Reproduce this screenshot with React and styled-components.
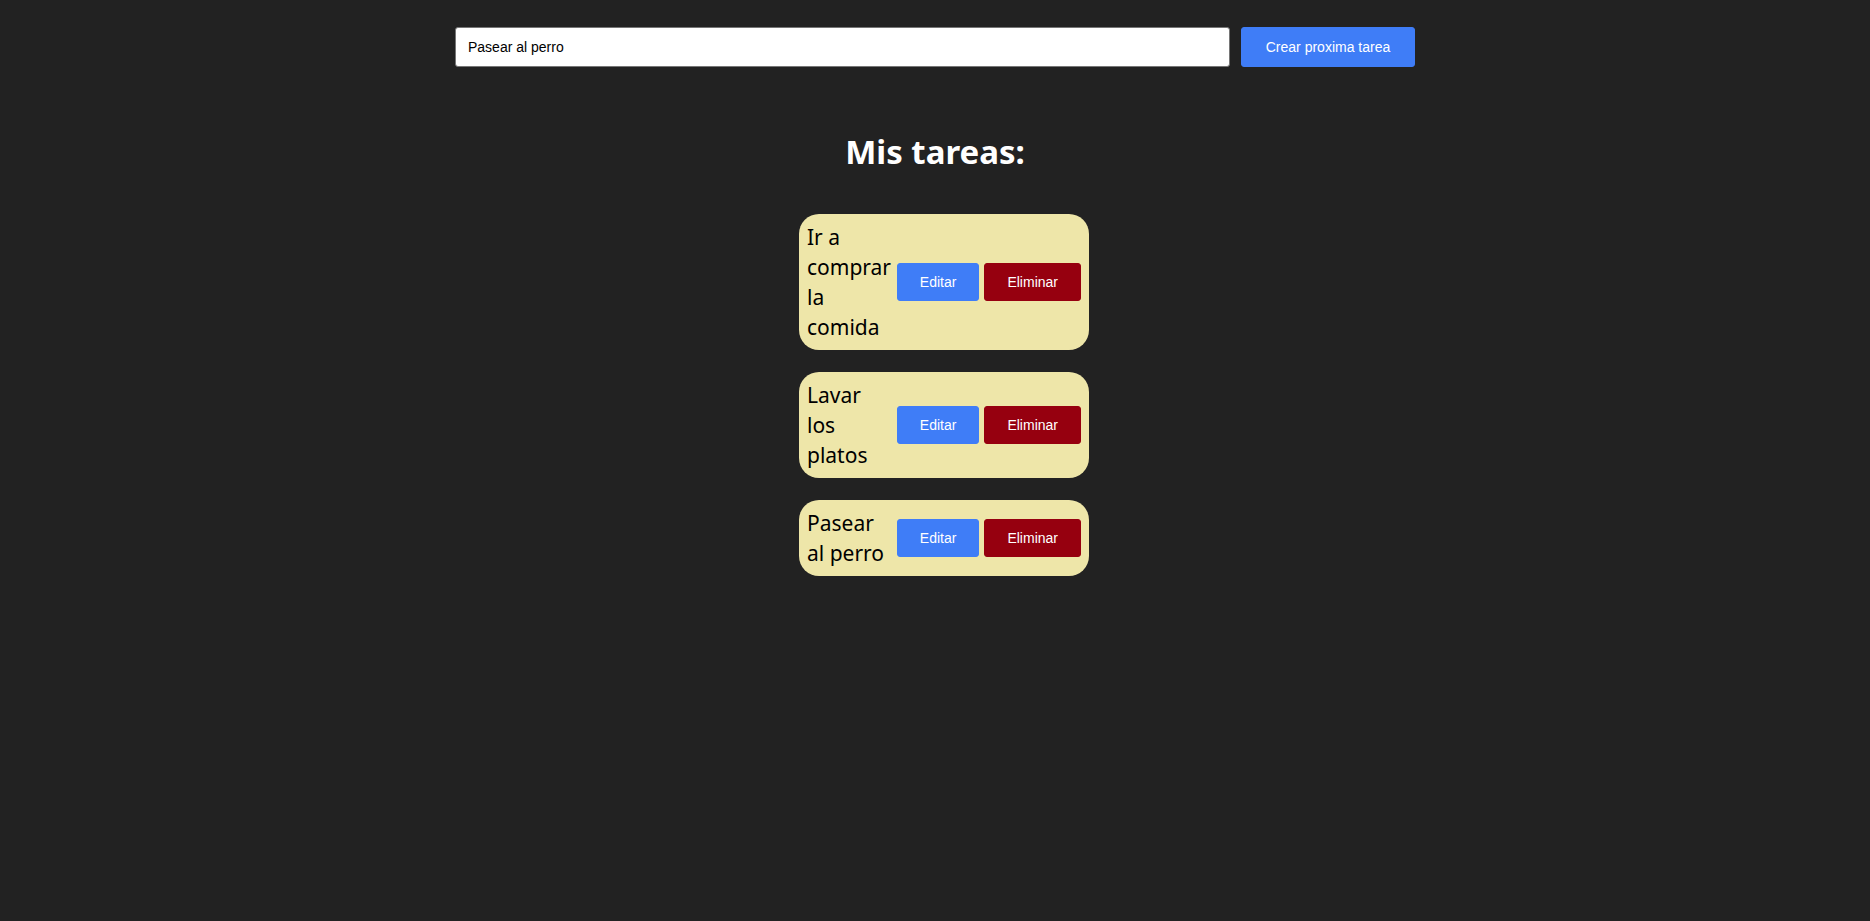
import React, { useState } from "react";
import styled, { createGlobalStyle } from "styled-components";

const GlobalStyle = createGlobalStyle`
  body {
    margin: 0;
    background-color: #222222;
    font-family: "Noto Sans", "Open Sans", sans-serif;
  }
`;

const Page = styled.div`
  min-height: 100vh;
  padding-top: 27px;
  box-sizing: border-box;
`;

const Form = styled.form`
  display: flex;
  gap: 11px;
  width: 960px;
  margin: 0 auto;
`;

const TaskInput = styled.input`
  flex: 1;
  height: 40px;
  box-sizing: border-box;
  padding: 0 12px;
  border: 1px solid #767676;
  border-radius: 3px;
  background: #ffffff;
  color: #000000;
  font-family: "Liberation Sans", Arial, sans-serif;
  font-size: 14px;
  outline: none;
`;

const Button = styled.button`
  height: ${(props) => props.height || 38}px;
  padding: 0 22px;
  border: 1px solid ${(props) => props.color};
  border-radius: 3px;
  background-color: ${(props) => props.color};
  color: #ffffff;
  font-family: "Liberation Sans", Arial, sans-serif;
  font-size: 14px;
  cursor: pointer;
  flex-shrink: 0;
`;

const Title = styled.h1`
  margin: 62px 0 40px;
  text-align: center;
  color: #ffffff;
  font-size: 33px;
  font-weight: 700;
`;

const List = styled.ul`
  list-style: none;
  margin: 0;
  padding: 0 0 0 18px;
  display: flex;
  flex-direction: column;
  align-items: center;
  gap: 22px;
`;

const Card = styled.li`
  display: flex;
  align-items: center;
  gap: 5px;
  width: 290px;
  box-sizing: border-box;
  padding: 8px;
  border-radius: 20px;
  background-color: #eee6a9;
`;

const TaskText = styled.span`
  flex: 1;
  min-width: 0;
  color: #000000;
  font-size: 21px;
  line-height: 30px;
`;

const tareasIniciales = ["Ir a comprar la comida", "Lavar los platos", "Pasear al perro"];

export default function App() {
  const [texto, setTexto] = useState("Pasear al perro");
  const [tareas] = useState(tareasIniciales);

  return (
    <Page>
      <GlobalStyle />
      <Form onSubmit={(e) => e.preventDefault()}>
        <TaskInput value={texto} onChange={(e) => setTexto(e.target.value)} />
        <Button type="submit" color="#3f7df7" height={40} style={{ width: 174 }}>
          Crear proxima tarea
        </Button>
      </Form>
      <Title>Mis tareas:</Title>
      <List>
        {tareas.map((tarea) => (
          <Card key={tarea}>
            <TaskText>{tarea}</TaskText>
            <Button color="#3f7df7">Editar</Button>
            <Button color="#96000f">Eliminar</Button>
          </Card>
        ))}
      </List>
    </Page>
  );
}
